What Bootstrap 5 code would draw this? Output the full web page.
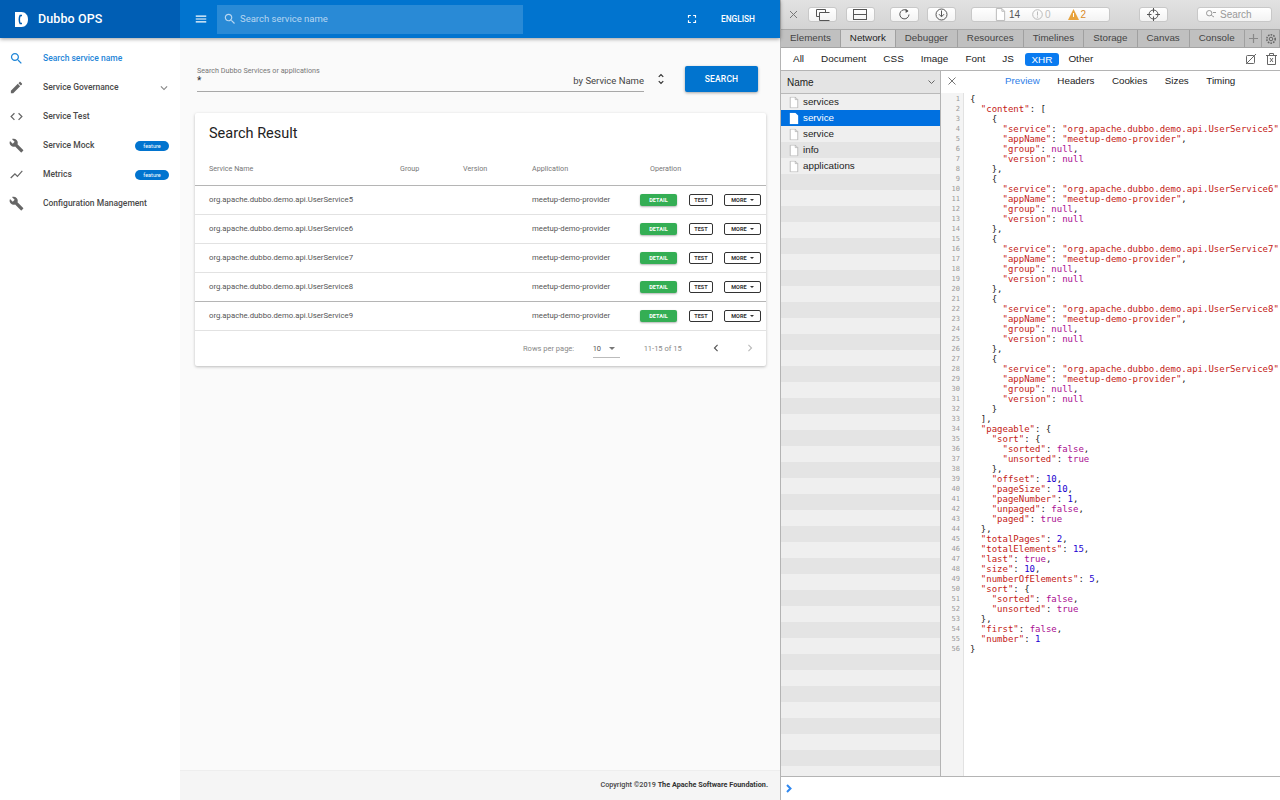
<!DOCTYPE html>
<html lang="en">
<head>
<meta charset="utf-8">
<title>Dubbo OPS</title>
<link rel="stylesheet" href="https://cdn.jsdelivr.net/npm/bootstrap@5.3.0/dist/css/bootstrap.min.css">
<style>
html,body{height:100%;overflow:hidden}
body{font-family:Roboto,sans-serif;background:#fff;color:#333}
.shell{height:800px;width:1280px}
.appzone{width:780px;background:#fafafa;flex:none}
.ico{fill:currentColor;display:block;flex:none}
.topbar{height:38px;flex:none;background:#0174cf;box-shadow:0 1px 4px rgba(0,0,0,.4);position:relative;z-index:2;color:#fff}
.brandbox{width:180px;background:#005eb4;font-size:12.5px;font-weight:500;padding-left:15px;gap:10px;letter-spacing:.1px}
.menubtn{margin:0 9px 0 14px}
.searchbox{width:306px;height:29px;background:rgba(255,255,255,.16);padding-left:6px;gap:3px;font-size:9.5px;color:#b7d6f1}
.langbtn{font-size:8.3px;font-weight:500;margin:0 25px 0 22px}
.sidenav{width:180px;flex:none;background:#fff;padding-top:6px}
.navrow{height:29px;padding-left:9px;font-size:8.5px;font-weight:500;color:#4a4a4a}
.navrow .ico{color:#666;margin-right:19px}
.navrow.on,.navrow.on .ico{color:#1f86d8}
.navrow .navlabel{flex:1 1 auto;white-space:nowrap}
.featpill{width:34px;height:10px;line-height:10px;background:#0174cf;color:#fff;border-radius:5px;font-size:5.5px;text-align:center;margin-right:11px;font-weight:400}
.navrow .caretdown{color:#888;margin-right:9px}
.mainzone{min-width:0;background:#fafafa}
.mainbody{padding:17px 14px 0 15px}
.searchform{padding:0 8px 0 2px;height:40px;margin:4px 0 14px}
.fieldwrap{width:447px;height:26px;border-bottom:1px solid #a8a8a8;position:relative}
.fieldlabel{font-size:7.2px;color:#777;line-height:9px}
.fieldstar{font-size:10px;line-height:11px;color:#333}
.fieldby{position:absolute;right:0;bottom:3px;font-size:9.5px;color:#444}
.updown{margin:0 17px 0 10px;color:#333}
.searchbtn{width:73px;height:26px;padding:1px 0 0;background:#0174cf;border:0;border-radius:2px;color:#fff;font-size:8.5px;font-weight:500;box-shadow:0 1px 3px rgba(0,0,0,.35);letter-spacing:.2px}
.resultbox{width:571px;background:#fff;box-shadow:0 1px 3px rgba(0,0,0,.25);border-radius:2px;height:253px}
.resulttitle{font-size:14.5px;font-weight:400;color:#222;padding:12px 14px 0;height:41px;margin:0;line-height:18px}
.resulttable{table-layout:fixed;width:100%;margin:0;font-size:7.75px;--bs-table-bg:transparent}
.resulttable th{font-weight:400;color:#777;height:32px;padding:0 0 0 14px;vertical-align:middle;border-bottom:1px solid #b5b5b5;font-size:7.2px}
.resulttable td{height:28.8px;padding:0 0 0 14px;vertical-align:middle;color:#555;border-bottom:1px solid #e2e2e2}
.resulttable tr:first-child td{height:29.4px}
.resulttable tr:nth-child(4) td{border-bottom-color:#b5b5b5}
.resulttable td.opscell{padding:0 0 0 4px}
.colname{width:191px}.colgroup{width:63px}.colver{width:69px}.colapp{width:118px}
.opbtn{height:12px;padding:0;border-radius:2px;font-size:5.5px;font-weight:700;line-height:10px;display:flex;align-items:center;justify-content:center;letter-spacing:.1px;background:#fff;border:1px solid #333;color:#333}
.opdetail{width:37px;background:#34ae54;border:0;color:#fff;box-shadow:0 1px 2px rgba(0,0,0,.3)}
.optest{width:24px;margin-left:12px}
.opmore{width:37px;margin-left:11px;gap:3px}
.tricaret{width:0;height:0;border:2.5px solid transparent;border-top-color:currentColor;border-bottom:0}
.pagerrow{height:36px;font-size:7.5px;color:#888;padding-left:328px}
.perpage{width:27px;height:19px;margin:0 24px 0 18.5px;border-bottom:1px solid #bbb;color:#555;padding-top:1px}
.perpage .tricaret{margin-left:8px;border-width:3.5px;border-bottom:0;color:#777}
.pagerarrows{margin-left:27px;gap:20px;color:#555}
.pagerarrows .ico:last-child{color:#bbb}
.footzone{height:30px;background:#f5f5f5;border-top:1px solid #eee;font-size:7.25px;font-weight:500;color:#444;padding-right:12px}
.footzone b{font-weight:700;color:#333}
.devtools{width:500px;flex:none;border-left:1px solid #b4b4b4;font-family:"Liberation Sans",Arial,sans-serif;font-size:10px;color:#222;background:#fff}
.dvbar{height:29px;flex:none;background:linear-gradient(#e2e2e2,#d3d3d3);padding-left:8px}
.dvclose{color:#777;width:9px;margin-right:10px}
.dvbtn{height:15px;background:linear-gradient(#fff,#f3f3f3);border:1px solid #c8c8c8;border-radius:3px;color:#555;flex:none}
.dvw28{width:29px}
.dvst{width:139px;font-size:10px;color:#555}
.dvsearch{width:75px;color:#999;justify-content:flex-start!important;padding-left:8px;gap:4px}
.gap9{margin-left:8.5px}.gap15{margin-left:15px}.gap29{margin-left:29px}
.numfirst{margin-left:3px}.iconnext{margin-left:12px}.iconlast{margin-left:17px}.numtiny{margin-left:2px}
.warnnum{color:#d98a1f}
.infonum{color:#bbb}
.dvtabs{height:19px;flex:none;background:#b9b9b9;border-top:1px solid #a9a9a9;border-bottom:1px solid #a4a4a4;color:#444}
.dvtab{padding:0 9px;border-right:1px solid #a0a0a0;background:#c0c0c0;line-height:16px;font-size:9.8px}
.dvtab.cur{background:#d6d6d6;color:#222}
.dvsq{width:19px;border-right:1px solid #a0a0a0;background:#c0c0c0;color:#888;justify-content:center}
.dvfilter{height:23px;flex:none;background:#fff;border-bottom:1px solid #b4b4b4;padding-left:12px;gap:17px;color:#222;font-size:9.95px}
.dvfilter .pillxhr{background:#0a7bf0;color:#fff;border-radius:3px;padding:0 6.5px;line-height:13px;margin:0 -7.5px 0 -6px;font-weight:400}
.filtend{margin-left:auto;gap:9px;padding-right:3px;color:#555}
.dvsplit{min-height:0}
.listpane{width:160px;flex:none;border-right:1px solid #b4b4b4;background:repeating-linear-gradient(#efefef 0,#efefef 16px,#e4e4e4 16px,#e4e4e4 32px) 0 23px}
.listhead{height:23px;background:#e4e4e4;border-bottom:1px solid #b9b9b9;padding:0 5px 0 6px;justify-content:space-between}
.filerow{height:16px;padding-left:8px;gap:4px;font-size:9.8px;color:#222}
.filerow.cur{background:#0070e0;color:#fff}
.detailpane{min-width:0;overflow:hidden}
.detailhead{height:22px;flex:none;background:#fff;position:relative;padding:0 0 2px 64px;color:#222;font-size:9.8px}
.detailhead .dhx{position:absolute;left:7px;top:6px;color:#777}
.detailhead span{margin-right:17.5px}
.detailhead .dhcur{color:#2f80e8}
.codearea{min-height:0;background:#fff}
.linenos{width:23px;flex:none;background:#f4f4f4;border-right:1px solid #e2e2e2;margin:0;padding:1px 3px 0 0;text-align:right;font:7px/10px "DejaVu Sans Mono",monospace;color:#9a9a9a;overflow:hidden}
.codebody{margin:0;padding:1px 0 0 6px;font:9px/10px "DejaVu Sans Mono",monospace;color:#222;overflow:hidden;white-space:pre;flex:1 1 auto}
.jk,.js{color:#c41a16}.jb{color:#aa0d91}.jn{color:#1c00cf}
.consolebar{height:24px;flex:none;border-top:1px solid #b4b4b4;background:#fff;color:#2f88f0;padding-left:5px}
</style>
</head>
<body>
<svg width="0" height="0" class="position-absolute">
<defs>
<symbol id="i-search" viewBox="0 0 24 24"><path d="M15.5 14h-.79l-.28-.27C15.41 12.59 16 11.11 16 9.5 16 5.91 13.09 3 9.5 3S3 5.91 3 9.5 5.91 16 9.5 16c1.61 0 3.09-.59 4.23-1.57l.27.28v.79l5 4.99L20.49 19l-4.99-5zm-6 0C7.01 14 5 11.99 5 9.5S7.01 5 9.5 5 14 7.01 14 9.5 11.99 14 9.5 14z"/></symbol>
<symbol id="i-edit" viewBox="0 0 24 24"><path d="M3 17.25V21h3.75L17.81 9.94l-3.75-3.75L3 17.25zM20.71 7.04c.39-.39.39-1.02 0-1.41l-2.34-2.34c-.39-.39-1.02-.39-1.41 0l-1.83 1.83 3.75 3.75 1.83-1.83z"/></symbol>
<symbol id="i-code" viewBox="0 0 24 24"><path d="M9.4 16.6L4.8 12l4.6-4.6L8 6l-6 6 6 6 1.4-1.4zm5.2 0l4.6-4.6-4.6-4.6L16 6l6 6-6 6-1.4-1.4z"/></symbol>
<symbol id="i-build" viewBox="0 0 24 24"><path d="M22.7 19l-9.1-9.1c.9-2.3.4-5-1.5-6.9-2-2-5-2.4-7.4-1.3L9 6 6 9 1.6 4.7C.4 7.1.9 10.1 2.9 12.1c1.9 1.9 4.6 2.4 6.9 1.5l9.1 9.1c.4.4 1 .4 1.4 0l2.3-2.3c.5-.4.5-1.1.1-1.4z"/></symbol>
<symbol id="i-chart" viewBox="0 0 24 24"><path d="M3.5 18.49l6-6.01 4 4L22 6.92l-1.41-1.41-7.09 7.97-4-4L2 16.99z"/></symbol>
<symbol id="i-more" viewBox="0 0 24 24"><path d="M16.59 8.59L12 13.17 7.41 8.59 6 10l6 6 6-6z"/></symbol>
<symbol id="i-menu" viewBox="0 0 24 24"><path d="M3 18h18v-2H3v2zm0-5h18v-2H3v2zm0-7v2h18V6H3z"/></symbol>
<symbol id="i-full" viewBox="0 0 24 24"><path d="M7 14H5v5h5v-2H7v-3zm-2-4h2V7h3V5H5v5zm12 7h-3v2h5v-5h-2v3zM14 5v2h3v3h2V5h-5z"/></symbol>
<symbol id="i-unfold" viewBox="0 0 24 24"><path d="M12 5.83L15.17 9l1.41-1.41L12 3 7.41 7.59 8.83 9 12 5.83zm0 12.34L8.83 15l-1.41 1.41L12 21l4.59-4.59L15.17 15 12 18.17z"/></symbol>
<symbol id="i-left" viewBox="0 0 24 24"><path d="M15.41 7.41L14 6l-6 6 6 6 1.41-1.41L10.83 12z"/></symbol>
<symbol id="i-right" viewBox="0 0 24 24"><path d="M10 6L8.59 7.41 13.17 12l-4.58 4.59L10 18l6-6z"/></symbol>
<symbol id="i-file" viewBox="0 0 12 14"><path d="M1.5.5h6l3 3v10h-9z" fill="#fff" stroke="#b5b5b5"/><path d="M7.5.5v3h3" fill="none" stroke="#b5b5b5"/></symbol>
<symbol id="i-filew" viewBox="0 0 12 14"><path d="M1 0h6.5L11 3.5V14H1z" fill="#fff"/></symbol>
</defs>
</svg>

<div class="d-flex shell">
  <div class="appzone d-flex flex-column">
    <header class="topbar d-flex align-items-center">
      <div class="brandbox d-flex align-items-center h-100">
        <svg class="ico" width="13" height="15" viewBox="0 0 13 15"><path d="M0 0h6.5C10.5 0 13 3.2 13 7.5S10.5 15 6.5 15H0z" fill="#fff"/><path d="M7 3.5H5.2C4.6 4.5 4.3 6 4.3 7.5s.3 3 .9 4H7" fill="none" stroke="#005eb4" stroke-width="1.5"/></svg>
        <span>Dubbo OPS</span>
      </div>
      <svg class="ico menubtn" width="14" height="14"><use href="#i-menu"/></svg>
      <div class="searchbox d-flex align-items-center">
        <svg class="ico" width="14" height="14"><use href="#i-search"/></svg>
        <span>Search service name</span>
      </div>
      <svg class="ico ms-auto" width="14" height="14"><use href="#i-full"/></svg>
      <span class="langbtn">ENGLISH</span>
    </header>
    <div class="d-flex flex-grow-1 overflow-hidden">
      <nav class="sidenav">
        <div class="navrow on d-flex align-items-center"><svg class="ico" width="15" height="15"><use href="#i-search"/></svg><span class="navlabel">Search service name</span></div>
        <div class="navrow d-flex align-items-center"><svg class="ico" width="15" height="15"><use href="#i-edit"/></svg><span class="navlabel">Service Governance</span><svg class="ico caretdown" width="14" height="14"><use href="#i-more"/></svg></div>
        <div class="navrow d-flex align-items-center"><svg class="ico" width="15" height="15"><use href="#i-code"/></svg><span class="navlabel">Service Test</span></div>
        <div class="navrow d-flex align-items-center"><svg class="ico" width="15" height="15"><use href="#i-build"/></svg><span class="navlabel">Service Mock</span><span class="featpill">feature</span></div>
        <div class="navrow d-flex align-items-center"><svg class="ico" width="15" height="15"><use href="#i-chart"/></svg><span class="navlabel">Metrics</span><span class="featpill">feature</span></div>
        <div class="navrow d-flex align-items-center"><svg class="ico" width="15" height="15"><use href="#i-build"/></svg><span class="navlabel">Configuration Management</span></div>
      </nav>
      <div class="mainzone flex-grow-1 d-flex flex-column">
        <main class="mainbody flex-grow-1">
          <div class="searchform d-flex align-items-center">
            <div class="fieldwrap">
              <div class="fieldlabel">Search Dubbo Services or applications</div>
              <div class="fieldstar">*</div>
              <span class="fieldby">by Service Name</span>
            </div>
            <svg class="ico updown" width="14" height="14"><use href="#i-unfold"/></svg>
            <button type="button" class="btn searchbtn">SEARCH</button>
          </div>
          <section class="resultbox d-flex flex-column">
            <h2 class="resulttitle">Search Result</h2>
            <table class="table resulttable">
              <colgroup><col class="colname"><col class="colgroup"><col class="colver"><col class="colapp"><col></colgroup>
              <thead><tr><th>Service Name</th><th>Group</th><th>Version</th><th>Application</th><th>Operation</th></tr></thead>
              <tbody>
                <tr><td>org.apache.dubbo.demo.api.UserService5</td><td></td><td></td><td>meetup-demo-provider</td><td class="opscell"><div class="d-flex"><button class="btn opbtn opdetail">DETAIL</button><button class="btn opbtn optest">TEST</button><button class="btn opbtn opmore">MORE<i class="tricaret"></i></button></div></td></tr>
                <tr><td>org.apache.dubbo.demo.api.UserService6</td><td></td><td></td><td>meetup-demo-provider</td><td class="opscell"><div class="d-flex"><button class="btn opbtn opdetail">DETAIL</button><button class="btn opbtn optest">TEST</button><button class="btn opbtn opmore">MORE<i class="tricaret"></i></button></div></td></tr>
                <tr><td>org.apache.dubbo.demo.api.UserService7</td><td></td><td></td><td>meetup-demo-provider</td><td class="opscell"><div class="d-flex"><button class="btn opbtn opdetail">DETAIL</button><button class="btn opbtn optest">TEST</button><button class="btn opbtn opmore">MORE<i class="tricaret"></i></button></div></td></tr>
                <tr><td>org.apache.dubbo.demo.api.UserService8</td><td></td><td></td><td>meetup-demo-provider</td><td class="opscell"><div class="d-flex"><button class="btn opbtn opdetail">DETAIL</button><button class="btn opbtn optest">TEST</button><button class="btn opbtn opmore">MORE<i class="tricaret"></i></button></div></td></tr>
                <tr><td>org.apache.dubbo.demo.api.UserService9</td><td></td><td></td><td>meetup-demo-provider</td><td class="opscell"><div class="d-flex"><button class="btn opbtn opdetail">DETAIL</button><button class="btn opbtn optest">TEST</button><button class="btn opbtn opmore">MORE<i class="tricaret"></i></button></div></td></tr>
              </tbody>
            </table>
            <div class="pagerrow d-flex align-items-center">
              <span>Rows per page:</span>
              <span class="perpage d-flex align-items-center">10<i class="tricaret"></i></span>
              <span>11-15 of 15</span>
              <span class="pagerarrows d-flex"><svg class="ico" width="14" height="14"><use href="#i-left"/></svg><svg class="ico" width="14" height="14"><use href="#i-right"/></svg></span>
            </div>
          </section>
        </main>
        <footer class="footzone d-flex align-items-center justify-content-end"><span>Copyright ©2019 <b>The Apache Software Foundation.</b></span></footer>
      </div>
    </div>
  </div>

  <div class="devtools d-flex flex-column">
    <div class="dvbar d-flex align-items-center">
      <svg class="dvclose" height="9" viewBox="0 0 9 9"><path d="M1 1l7 7M8 1L1 8" stroke="currentColor" fill="none"/></svg>
      <div class="dvbtn dvw28 d-flex align-items-center justify-content-center"><svg width="14" height="12" viewBox="0 0 14 12" fill="none" stroke="#555"><path d="M.5.5h9v3M.5.5v7h3M3.5 3.5h10M3.5 3.5v8h10"/></svg></div>
      <div class="dvbtn dvw28 gap9 d-flex align-items-center justify-content-center"><svg width="14" height="11" viewBox="0 0 14 11" fill="none" stroke="#555"><rect x=".5" y=".5" width="13" height="10"/><path d="M.5 5.5h13"/></svg></div>
      <div class="dvbtn dvw28 gap15 d-flex align-items-center justify-content-center"><svg width="13" height="13" viewBox="0 0 13 13" fill="none" stroke="#555"><path d="M9.8 3.2A4.6 4.6 0 1 0 11 6.5"/><path d="M7.5 .8l3 2.2-2.8 2.1z" fill="#555" stroke="none"/></svg></div>
      <div class="dvbtn dvw28 gap9 d-flex align-items-center justify-content-center"><svg width="13" height="13" viewBox="0 0 13 13" fill="none" stroke="#555"><circle cx="6.5" cy="6.5" r="5.5"/><path d="M6.5 2.5v6M4 6.2l2.5 2.6L9 6.2"/></svg></div>
      <div class="dvbtn dvst gap15 d-flex align-items-center justify-content-center">
        <svg width="11" height="13" viewBox="0 0 12 14"><use href="#i-file"/></svg><span class="numfirst">14</span>
        <svg class="iconnext" width="11" height="11" viewBox="0 0 11 11" fill="none" stroke="#bbb"><circle cx="5.5" cy="5.5" r="4.8"/><path d="M5.5 2.5v4M5.5 7.5v1.2"/></svg><span class="numtiny infonum">0</span>
        <svg class="iconlast" width="11" height="11" viewBox="0 0 11 11"><path d="M5.5 0L11 11H0z" fill="#e8a33d"/><path d="M5.5 4v4" stroke="#fff"/></svg><span class="numtiny warnnum">2</span>
      </div>
      <div class="dvbtn dvw28 gap29 d-flex align-items-center justify-content-center"><svg width="13" height="13" viewBox="0 0 13 13" fill="none" stroke="#555"><circle cx="6.5" cy="6.5" r="4.5"/><path d="M6.5 0v4.5M6.5 8.5V13M0 6.5h4.5M8.5 6.5H13"/></svg></div>
      <div class="dvbtn dvsearch gap29 d-flex align-items-center"><svg width="10" height="9" viewBox="0 0 10 9" fill="none" stroke="#999"><circle cx="3.2" cy="3.2" r="2.7"/><path d="M5.3 5.3L8 7M7 2.5h3"/></svg><span>Search</span></div>
    </div>
    <div class="dvtabs d-flex">
      <span class="dvtab">Elements</span><span class="dvtab cur">Network</span><span class="dvtab">Debugger</span><span class="dvtab">Resources</span><span class="dvtab">Timelines</span><span class="dvtab">Storage</span><span class="dvtab">Canvas</span><span class="dvtab">Console</span>
      <span class="dvsq d-flex align-items-center"><svg width="9" height="9" viewBox="0 0 9 9"><path d="M4.5 0v9M0 4.5h9" stroke="#888" stroke-width="1.2"/></svg></span>
      <span class="dvsq flex-grow-1 d-flex align-items-center"><svg width="12" height="12" viewBox="0 0 12 12" fill="none" stroke="#666"><circle cx="6" cy="6" r="1.8"/><circle cx="6" cy="6" r="4.2" stroke-width="1.6" stroke-dasharray="1.6 1.1"/></svg></span>
    </div>
    <div class="dvfilter d-flex align-items-center">
      <span>All</span><span>Document</span><span>CSS</span><span>Image</span><span>Font</span><span>JS</span><span class="pillxhr">XHR</span><span>Other</span>
      <span class="filtend d-flex align-items-center">
        <svg width="12" height="12" viewBox="0 0 12 12" fill="none" stroke="#666"><rect x="1.5" y="2.5" width="8" height="8" rx="1"/><path d="M11 1L1 11"/></svg>
        <svg width="11" height="12" viewBox="0 0 11 12" fill="none" stroke="#666"><path d="M0 2.5h11M3.5 2.5V.5h4v2M1.5 2.5v9h8v-9M4 5l3 4M7 5L4 9"/></svg>
      </span>
    </div>
    <div class="dvsplit d-flex flex-grow-1">
      <div class="listpane">
        <div class="listhead d-flex align-items-center"><span>Name</span><svg width="7" height="5" viewBox="0 0 7 5" fill="none" stroke="#666"><path d="M.5 .5l3 3 3-3"/></svg></div>
        <div class="filerow d-flex align-items-center"><svg width="10" height="13" viewBox="0 0 12 14"><use href="#i-file"/></svg>services</div>
        <div class="filerow cur d-flex align-items-center"><svg width="10" height="13" viewBox="0 0 12 14"><use href="#i-filew"/></svg>service</div>
        <div class="filerow d-flex align-items-center"><svg width="10" height="13" viewBox="0 0 12 14"><use href="#i-file"/></svg>service</div>
        <div class="filerow d-flex align-items-center"><svg width="10" height="13" viewBox="0 0 12 14"><use href="#i-file"/></svg>info</div>
        <div class="filerow d-flex align-items-center"><svg width="10" height="13" viewBox="0 0 12 14"><use href="#i-file"/></svg>applications</div>
      </div>
      <div class="detailpane flex-grow-1 d-flex flex-column">
        <div class="detailhead d-flex align-items-center">
          <svg class="dhx" width="8" height="8" viewBox="0 0 8 8"><path d="M.5 .5l7 7M7.5 .5l-7 7" stroke="currentColor" fill="none"/></svg>
          <span class="dhcur">Preview</span><span>Headers</span><span>Cookies</span><span>Sizes</span><span>Timing</span>
        </div>
        <div class="codearea d-flex flex-grow-1">
<pre class="linenos">1
2
3
4
5
6
7
8
9
10
11
12
13
14
15
16
17
18
19
20
21
22
23
24
25
26
27
28
29
30
31
32
33
34
35
36
37
38
39
40
41
42
43
44
45
46
47
48
49
50
51
52
53
54
55
56</pre>
<pre class="codebody">{
  <span class="jk">"content"</span>: [
    {
      <span class="jk">"service"</span>: <span class="js">"org.apache.dubbo.demo.api.UserService5"</span>,
      <span class="jk">"appName"</span>: <span class="js">"meetup-demo-provider"</span>,
      <span class="jk">"group"</span>: <span class="jb">null</span>,
      <span class="jk">"version"</span>: <span class="jb">null</span>
    },
    {
      <span class="jk">"service"</span>: <span class="js">"org.apache.dubbo.demo.api.UserService6"</span>,
      <span class="jk">"appName"</span>: <span class="js">"meetup-demo-provider"</span>,
      <span class="jk">"group"</span>: <span class="jb">null</span>,
      <span class="jk">"version"</span>: <span class="jb">null</span>
    },
    {
      <span class="jk">"service"</span>: <span class="js">"org.apache.dubbo.demo.api.UserService7"</span>,
      <span class="jk">"appName"</span>: <span class="js">"meetup-demo-provider"</span>,
      <span class="jk">"group"</span>: <span class="jb">null</span>,
      <span class="jk">"version"</span>: <span class="jb">null</span>
    },
    {
      <span class="jk">"service"</span>: <span class="js">"org.apache.dubbo.demo.api.UserService8"</span>,
      <span class="jk">"appName"</span>: <span class="js">"meetup-demo-provider"</span>,
      <span class="jk">"group"</span>: <span class="jb">null</span>,
      <span class="jk">"version"</span>: <span class="jb">null</span>
    },
    {
      <span class="jk">"service"</span>: <span class="js">"org.apache.dubbo.demo.api.UserService9"</span>,
      <span class="jk">"appName"</span>: <span class="js">"meetup-demo-provider"</span>,
      <span class="jk">"group"</span>: <span class="jb">null</span>,
      <span class="jk">"version"</span>: <span class="jb">null</span>
    }
  ],
  <span class="jk">"pageable"</span>: {
    <span class="jk">"sort"</span>: {
      <span class="jk">"sorted"</span>: <span class="jb">false</span>,
      <span class="jk">"unsorted"</span>: <span class="jb">true</span>
    },
    <span class="jk">"offset"</span>: <span class="jn">10</span>,
    <span class="jk">"pageSize"</span>: <span class="jn">10</span>,
    <span class="jk">"pageNumber"</span>: <span class="jn">1</span>,
    <span class="jk">"unpaged"</span>: <span class="jb">false</span>,
    <span class="jk">"paged"</span>: <span class="jb">true</span>
  },
  <span class="jk">"totalPages"</span>: <span class="jn">2</span>,
  <span class="jk">"totalElements"</span>: <span class="jn">15</span>,
  <span class="jk">"last"</span>: <span class="jb">true</span>,
  <span class="jk">"size"</span>: <span class="jn">10</span>,
  <span class="jk">"numberOfElements"</span>: <span class="jn">5</span>,
  <span class="jk">"sort"</span>: {
    <span class="jk">"sorted"</span>: <span class="jb">false</span>,
    <span class="jk">"unsorted"</span>: <span class="jb">true</span>
  },
  <span class="jk">"first"</span>: <span class="jb">false</span>,
  <span class="jk">"number"</span>: <span class="jn">1</span>
}</pre>
        </div>
      </div>
    </div>
    <div class="consolebar d-flex align-items-center"><svg width="7" height="9" viewBox="0 0 7 9" fill="none" stroke="currentColor" stroke-width="2"><path d="M1 1l3.5 3.5L1 8"/></svg></div>
  </div>
</div>
</body>
</html>
